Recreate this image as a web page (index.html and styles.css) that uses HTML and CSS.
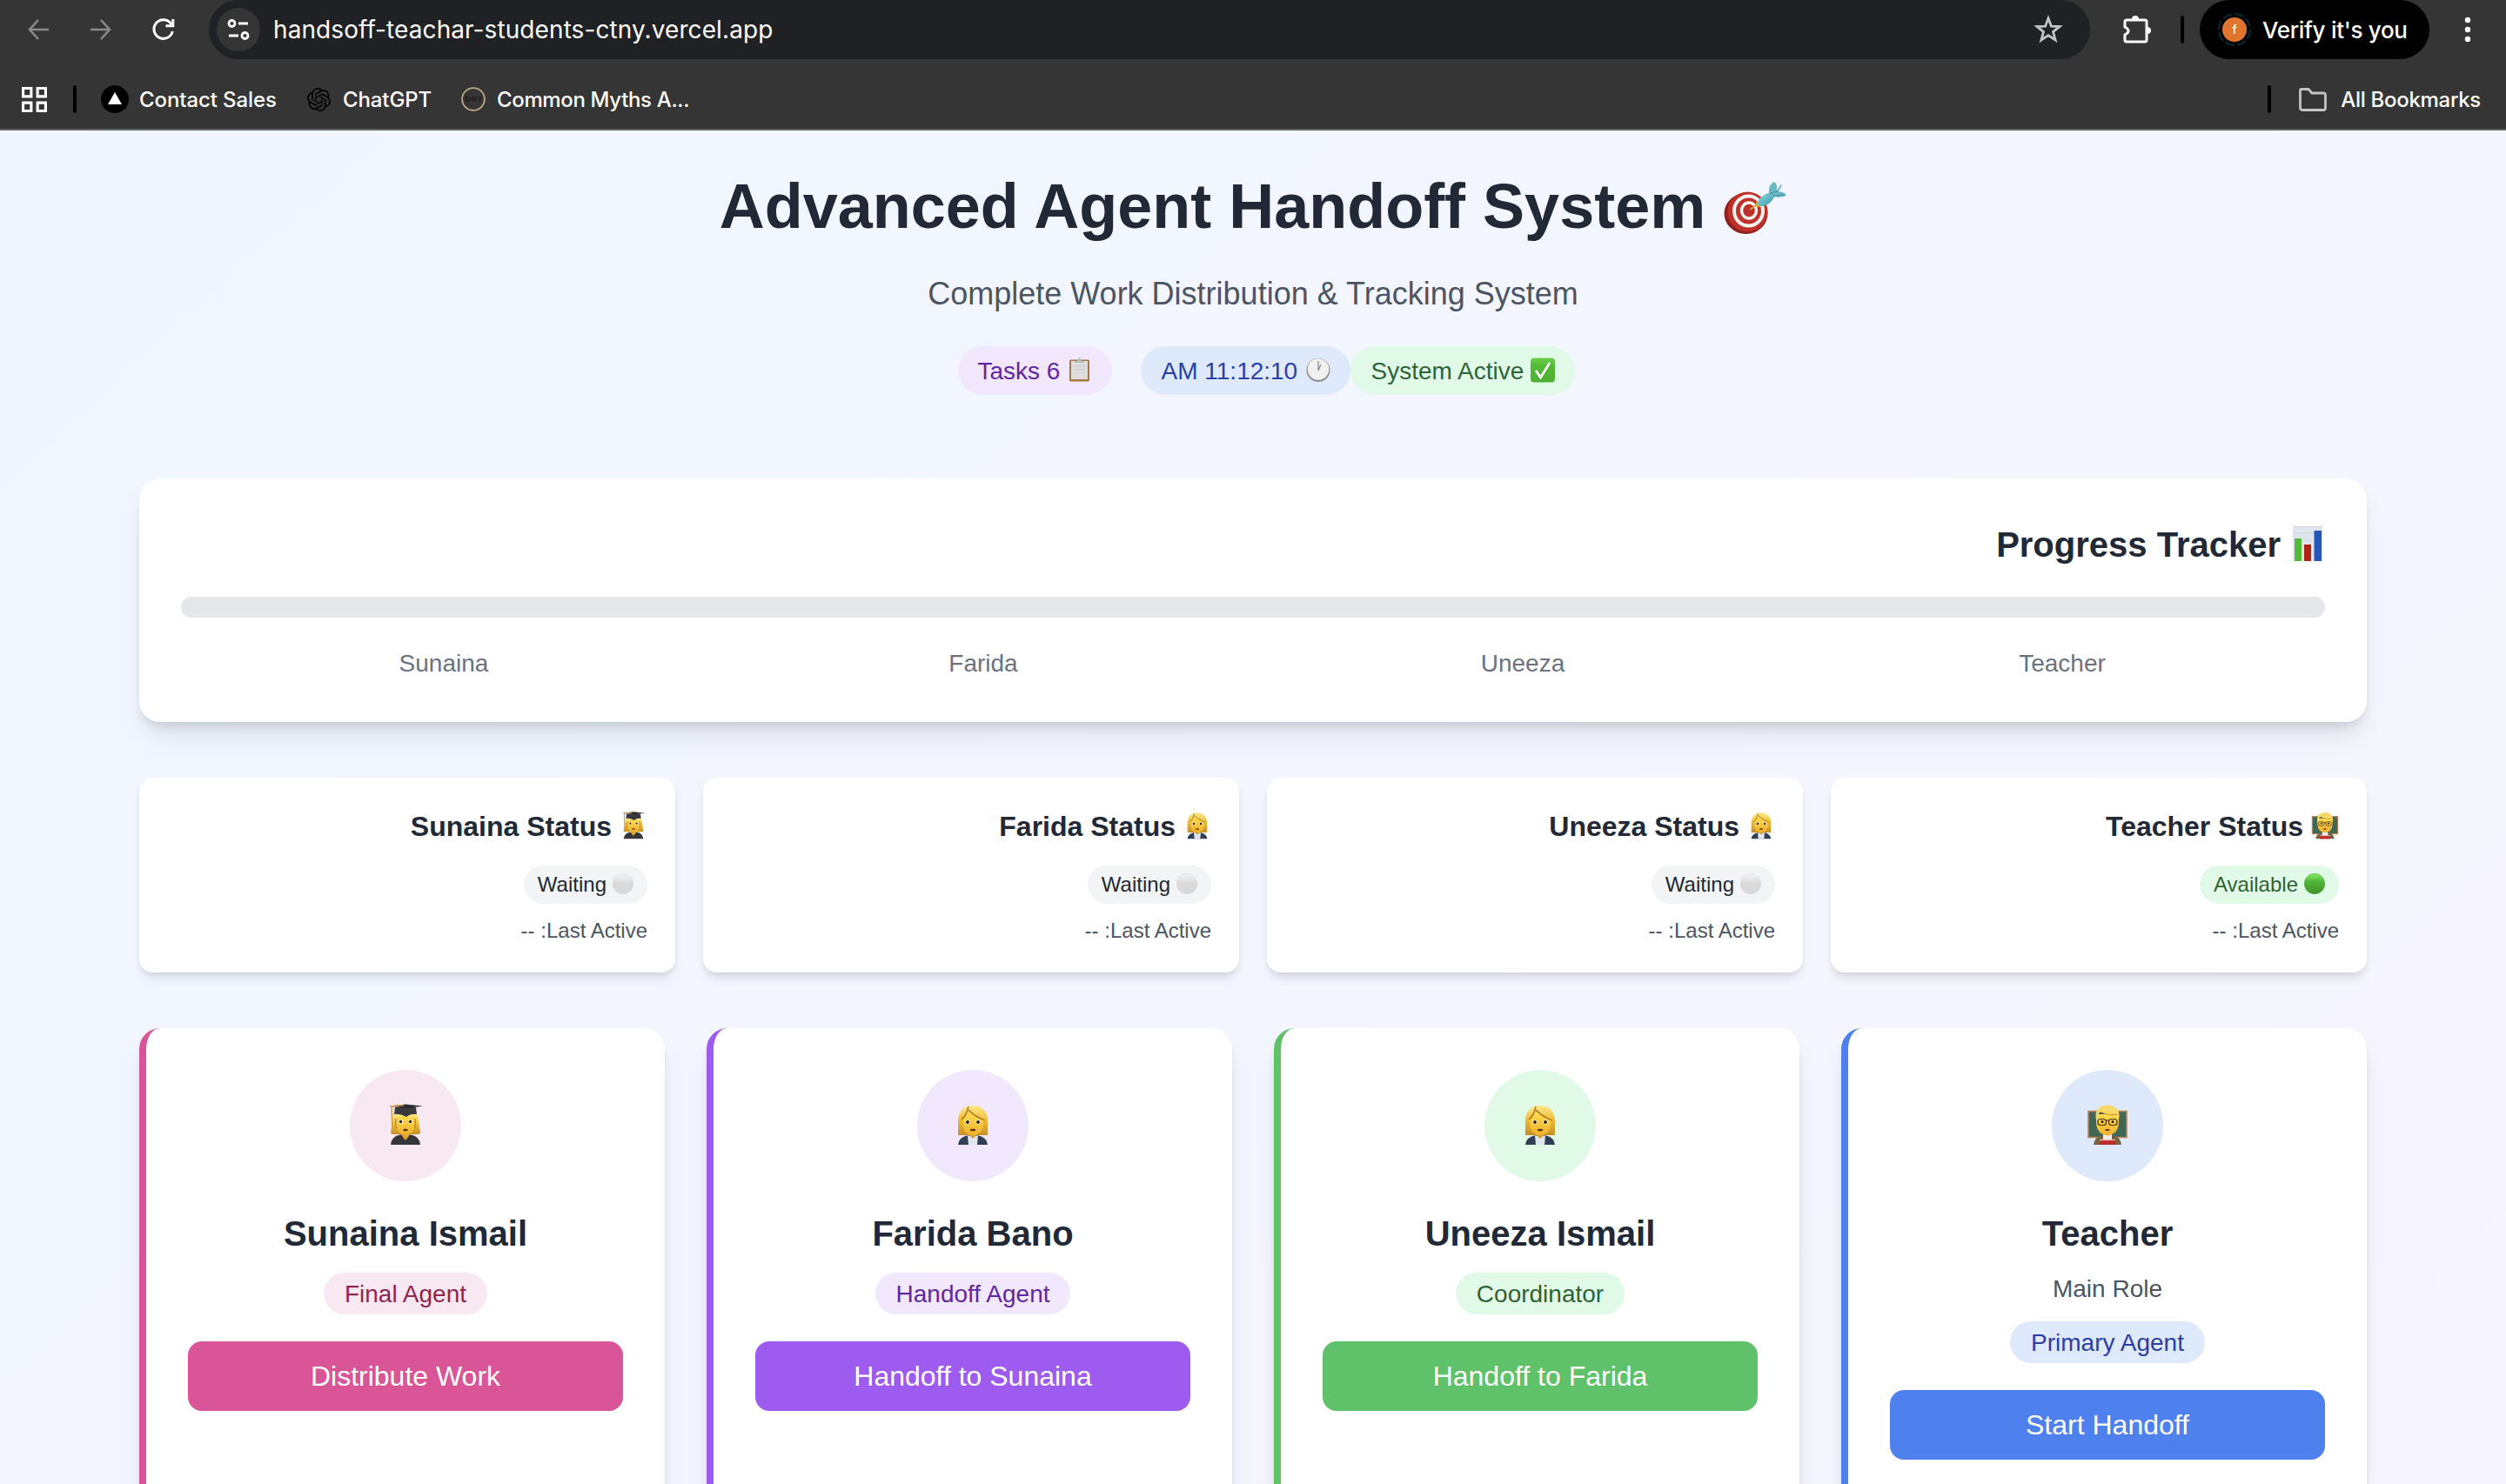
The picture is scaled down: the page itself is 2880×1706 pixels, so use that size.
FILE: index.html
```html
<!DOCTYPE html>
<html lang="en">
<head>
<meta charset="utf-8">
<title>Advanced Agent Handoff System</title>
<link rel="stylesheet" href="styles.css">
</head>
<body>
<svg class="defs" aria-hidden="true">
  <defs>
    <linearGradient id="gHair" x1="0" y1="0" x2="0" y2="1"><stop offset="0" stop-color="#ffe98a"/><stop offset=".5" stop-color="#eebb35"/><stop offset="1" stop-color="#c58f25"/></linearGradient>
    <linearGradient id="gFace" x1="0" y1="0" x2="0" y2="1"><stop offset="0" stop-color="#ffdc50"/><stop offset="1" stop-color="#eeb02c"/></linearGradient>
    <linearGradient id="gWhite" x1="0" y1="0" x2="0" y2="1"><stop offset="0" stop-color="#f6f6f6"/><stop offset=".5" stop-color="#d9d9d9"/><stop offset="1" stop-color="#dadada"/></linearGradient>
    <linearGradient id="gGreen" x1="0" y1="0" x2="0" y2="1"><stop offset="0" stop-color="#85f26b"/><stop offset=".4" stop-color="#50b437"/><stop offset="1" stop-color="#3f9227"/></linearGradient>
    <linearGradient id="gCheck" x1="0" y1="0" x2="0" y2="1"><stop offset="0" stop-color="#6fcf52"/><stop offset=".3" stop-color="#54bb36"/><stop offset="1" stop-color="#4fb032"/></linearGradient>
    <linearGradient id="gDart" x1="0" y1="0" x2="1" y2="1"><stop offset="0" stop-color="#8fdfe8"/><stop offset="1" stop-color="#3b96a5"/></linearGradient>
    <symbol id="student" viewBox="0 0 48 48">
      <path d="M10 12L7 33Q7 35 12 35H36Q41 35 41 33L38 12Z" fill="url(#gHair)"/>
      <path d="M7 47Q8 37 18 35.500H30Q40 37 41 47Z" fill="#35363a"/>
      <path d="M19 33H29L28 37 24 42 20 37Z" fill="#e3a429"/>
      <path d="M13 17Q24 10 35 17V23Q34 35 24 35.500Q14 35 13 23Z" fill="url(#gFace)"/>
      <path d="M13 17Q12 24 13.500 28M35 17Q36 24 34.500 28" fill="none" stroke="#a8731c" stroke-width="1"/>
      <circle cx="18.500" cy="20.500" r="2.600" fill="#fff8e0"/><circle cx="29.500" cy="20.500" r="2.600" fill="#fff8e0"/>
      <circle cx="18.500" cy="20.500" r="1.700" fill="#2d1c0c"/><circle cx="29.500" cy="20.500" r="1.700" fill="#2d1c0c"/>
      <ellipse cx="24" cy="30" rx="2.800" ry="1.300" fill="#5d2b10"/>
      <path d="M12 4H36L37 12Q30 11 25 15Q18 11 11 12Z" fill="#39393b"/>
      <path d="M5 2.500L24 .500 44 2.500 26 5Z" fill="#29292b"/>
      <path d="M22 1.500L8 3 9 30" fill="none" stroke="#d49a45" stroke-width="1.500"/>
    </symbol>
    <symbol id="office" viewBox="0 0 48 48">
      <path d="M7 36V18Q9 2 24 2Q39 2 41 18V36Z" fill="url(#gHair)"/>
      <path d="M7 47Q8 38 19 36H29Q40 38 41 47Z" fill="#313e55"/>
      <path d="M18 36.500H30L29 47H19Z" fill="#dde7ec"/><path d="M19 35H29L24 40Z" fill="#d8992b"/>
      <path d="M12.500 18Q18 14 20 9Q26 14 36 19V25Q34 36 24 36.500Q14 36 12.500 25Z" fill="url(#gFace)"/>
      <path d="M19 3Q17 13 11 18M19 7Q27 15 38 19" fill="none" stroke="#a4711d" stroke-width="1.300"/>
      <circle cx="18" cy="21" r="2.700" fill="#fff8e0"/><circle cx="30" cy="21" r="2.700" fill="#fff8e0"/>
      <circle cx="18" cy="21" r="1.900" fill="#2d1c0c"/><circle cx="30" cy="21" r="1.900" fill="#2d1c0c"/>
      <ellipse cx="24" cy="30" rx="3.200" ry="1.300" fill="#5d2b10"/>
    </symbol>
    <symbol id="teacher" viewBox="0 0 48 48">
      <rect x="2" y="8.500" width="44" height="30" fill="#416656" stroke="#b98258" stroke-width="1.600"/>
      <path d="M8 47Q9 38 17 37H31Q39 38 40 47Z" fill="#75623f"/><path d="M19 35H29V43H19Z" fill="#f2eeee"/>
      <path d="M15 41.500H33V47H15Z" fill="#bf2b2a"/><path d="M15 41.500H33" stroke="#e9b6ac" stroke-width="1.400"/>
      <path d="M11 12H37V22Q36 35 24 36.500Q12 35 11 22Z" fill="url(#gFace)"/>
      <path d="M10.500 17Q9 2 24 1.500Q39 2 37.500 17L35.500 12Q24 14 16 9Q13 11 12.500 16Z" fill="#f8d968"/>
      <path d="M35.500 12Q24 14 16 9" fill="none" stroke="#c48f28" stroke-width="1"/>
      <g fill="none" stroke="#4c3513" stroke-width="1.200"><rect x="13" y="17.500" width="9.500" height="7" rx="3"/><rect x="25.500" y="17.500" width="9.500" height="7" rx="3"/><path d="M22 19H26"/></g>
      <circle cx="18" cy="20.500" r="1.500" fill="#2d1c0c"/><circle cx="30" cy="20.500" r="1.500" fill="#2d1c0c"/>
      <ellipse cx="24" cy="30" rx="2.800" ry="1" fill="#5d2b10"/>
    </symbol>
    <symbol id="white" viewBox="0 0 24 24"><circle cx="12" cy="12" r="11.700" fill="url(#gWhite)" stroke="#cfcfcf" stroke-width=".5"/></symbol>
    <symbol id="green" viewBox="0 0 24 24"><circle cx="12" cy="12" r="11.700" fill="url(#gGreen)" stroke="#3f9a2a" stroke-width=".5"/></symbol>
  </defs>
</svg>

<header class="chrome">
  <div class="toolbar">
    <svg class="nav" viewBox="0 0 24 24"><path d="M24 12H2M12 1L2 12 12 23"/></svg>
    <svg class="nav fwd" viewBox="0 0 24 24"><path d="M0 12H22M12 1L22 12 12 23"/></svg>
    <svg class="reload" viewBox="0 0 28 28"><path d="M24.300 16A10.800 10.800 0 1 1 22 6.500L24.500 9M24.800 2V9.800H16.500"/></svg>
    <div class="omnibox">
      <span class="site"><svg viewBox="0 0 26 26"><circle cx="5.500" cy="6" r="3.500"/><path d="M13 6H24M2 20H13"/><circle cx="20.500" cy="20" r="3.500"/></svg></span>
      <span class="url">handsoff-teachar-students-ctny.vercel.app</span>
      <svg class="star" viewBox="0 0 32 32"><path d="M16 3L19.400 12.200 29 12.600 21.500 18.600 24.100 28 16 22.600 7.900 28 10.500 18.600 3 12.600 12.600 12.200Z"/></svg>
    </div>
    <svg class="puzzle" viewBox="0 0 34 34"><path d="M5 6H26Q28 6 28 8V29Q28 31 26 31H5Q3 31 3 29V23Q7 21 7 18.500Q7 16 3 14V8Q3 6 5 6Z" fill="none" stroke="#fff" stroke-width="3"/><path d="M11 5A4 4 0 0 1 19 5ZM29 14A4 4 0 0 1 29 22Z" fill="#fff"/></svg>
    <i class="bar b1"></i>
    <div class="verify"><svg viewBox="0 0 40 40"><circle cx="20" cy="20" r="18" fill="none" stroke="#0b2328" stroke-width="2.500" stroke-dasharray="11 3"/><circle cx="20" cy="20" r="14" fill="#e0752f"/><text x="20" y="25" text-anchor="middle" class="initial">f</text></svg><span>Verify it's you</span></div>
    <svg class="dots" viewBox="0 0 8 30"><circle cx="4" cy="4" r="3.200"/><circle cx="4" cy="15" r="3.200"/><circle cx="4" cy="26" r="3.200"/></svg>
  </div>
  <div class="bookmarks">
    <svg class="apps" viewBox="0 0 28 28"><path d="M1.500 1.500H10.500V10.500H1.500ZM17.500 1.500H26.500V10.500H17.500ZM1.500 17.500H10.500V26.500H1.500ZM17.500 17.500H26.500V26.500H17.500Z"/></svg>
    <i class="bar b2"></i>
    <svg class="fav" viewBox="0 0 32 32"><circle cx="16" cy="16" r="16"/><path d="M16 8L24 22H8Z" fill="#fff"/></svg>
    <span class="bm t1">Contact Sales</span>
    <svg class="gpt" viewBox="0 0 24 24"><path d="M22.2819 9.8211a5.9847 5.9847 0 0 0-.5157-4.9108 6.0462 6.0462 0 0 0-6.5098-2.9A6.0651 6.0651 0 0 0 4.9807 4.1818a5.9847 5.9847 0 0 0-3.9977 2.9 6.0462 6.0462 0 0 0 .7427 7.0966 5.98 5.98 0 0 0 .511 4.9107 6.051 6.051 0 0 0 6.5146 2.9001A5.9847 5.9847 0 0 0 13.2599 24a6.0557 6.0557 0 0 0 5.7718-4.2058 5.9894 5.9894 0 0 0 3.9977-2.9001 6.0557 6.0557 0 0 0-.7475-7.0729zm-9.022 12.6081a4.4755 4.4755 0 0 1-2.8764-1.0408l.1419-.0804 4.7783-2.7582a.7948.7948 0 0 0 .3927-.6813v-6.7369l2.02 1.1686a.071.071 0 0 1 .038.052v5.5826a4.504 4.504 0 0 1-4.4945 4.4944zm-9.6607-4.1254a4.4708 4.4708 0 0 1-.5346-3.0137l.142.0852 4.783 2.7582a.7712.7712 0 0 0 .7806 0l5.8428-3.3685v2.3324a.0804.0804 0 0 1-.0332.0615L9.74 19.9502a4.4992 4.4992 0 0 1-6.1408-1.6464zM2.3408 7.8956a4.485 4.485 0 0 1 2.3655-1.9728V11.6a.7664.7664 0 0 0 .3879.6765l5.8144 3.3543-2.0201 1.1685a.0757.0757 0 0 1-.071 0l-4.8303-2.7865A4.504 4.504 0 0 1 2.3408 7.872zm16.5963 3.8558L13.1038 8.364 15.1192 7.2a.0757.0757 0 0 1 .071 0l4.8303 2.7913a4.4944 4.4944 0 0 1-.6765 8.1042v-5.6772a.79.79 0 0 0-.407-.667zm2.0107-3.0231l-.142-.0852-4.7735-2.7818a.7759.7759 0 0 0-.7854 0L9.409 9.2297V6.8974a.0662.0662 0 0 1 .0284-.0615l4.8303-2.7866a4.4992 4.4992 0 0 1 6.6802 4.66zM8.3065 12.863l-2.02-1.1638a.0804.0804 0 0 1-.038-.0567V6.0742a4.4992 4.4992 0 0 1 7.3757-3.4537l-.142.0805L8.704 5.459a.7948.7948 0 0 0-.3927.6813zm1.0976-2.3654l2.602-1.4998 2.6069 1.4998v2.9994l-2.5974 1.4997-2.6067-1.4997Z"/></svg>
    <span class="bm t2">ChatGPT</span>
    <svg class="siny" viewBox="0 0 28 28"><circle cx="14" cy="14" r="12.900" fill="none" stroke="#bda982" stroke-width="1.800"/><text x="14.500" y="16.500" text-anchor="middle" class="tiny">SINY</text></svg>
    <span class="bm t3">Common Myths A...</span>
    <i class="bar b3"></i>
    <svg class="folder" viewBox="0 0 32 27"><path d="M3 1.500H11L15 6H28Q30.500 6 30.500 8.500V23Q30.500 25.500 28 25.500H4Q1.500 25.500 1.500 23V3Q1.500 1.500 3 1.500Z"/></svg>
    <span class="bm t4">All Bookmarks</span>
  </div>
</header>

<main class="page">
  <div class="wrap">
    <div class="hero">
      <h1><span>Advanced Agent Handoff System</span><svg viewBox="0 0 72 62"><ellipse cx="25.500" cy="37.500" rx="25" ry="23.500" fill="#8e211b"/><ellipse cx="27.500" cy="35.500" rx="23" ry="23" fill="#c0302a"/><ellipse cx="28.500" cy="34.500" rx="16.500" ry="17" fill="none" stroke="#f4f1ee" stroke-width="4"/><ellipse cx="29" cy="34" rx="8.500" ry="9" fill="none" stroke="#f4f1ee" stroke-width="3.500"/><path d="M30 33L40 26" stroke="#cba13b" stroke-width="2"/><path d="M38 23L43 30 36 29Z" fill="#e9b629"/><path d="M38 27Q41 16 54 13L58 18Q54 28 43 29Z" fill="url(#gDart)"/><path d="M52 14Q51 4 58 1Q62 4 61 11L66 4 67 5 63 12Q70 13 72 16Q68 20 56 18Z" fill="#68b9c4"/><path d="M53 15Q58 12 62 12M57 17L70 16" stroke="#3b8d9a" stroke-width="1" fill="none"/></svg></h1>
      <p class="sub">Complete Work Distribution &amp; Tracking System</p>
      <div class="pills">
        <span class="pill purple p1"><span>Tasks 6</span><svg viewBox="0 0 28 28"><rect x="2" y="2.500" width="23" height="25" rx="1.500" fill="#a87943"/><path d="M4 4H23V25H4Z" fill="#dedede"/><path d="M7 10H20M7 14H20M7 18H20" stroke="#cbcbcb"/><path d="M8 6V4H11Q13.500-4 16 4H19V6Z" fill="#b7bcc0"/></svg></span>
        <span class="pill blue p2"><span>AM 11:12:10</span><svg viewBox="0 0 28 28"><circle cx="14" cy="14.500" r="13.500" fill="#8c8f93"/><circle cx="14" cy="13.500" r="12.300" fill="#f0f0f0"/><path d="M14 15V4M14 15L17 8" stroke="#888" stroke-width="1.200"/></svg></span>
        <span class="pill greenp p3"><span>System Active</span><svg viewBox="0 0 28 28"><rect y=".500" width="28" height="28" rx="4" fill="url(#gCheck)"/><path d="M6 15L11.500 23 22 6" fill="none" stroke="#fff" stroke-width="2.800"/></svg></span>
      </div>
    </div>

    <section class="progress">
      <h2><span>Progress Tracker</span><svg viewBox="0 0 34 40"><rect width="34" height="40" fill="#dfe6ee"/><path d="M0 .500H34M0 8H34M0 16H34M0 24H34M0 32H34" stroke="#d0d9e2"/><path d="M2 14H10V40H2Z" fill="#55b93a"/><path d="M13 21H21V40H13Z" fill="#b02418"/><path d="M24.500 5H33V40H24.500Z" fill="#2557b8"/></svg></h2>
      <div class="track"></div>
      <div class="steps"><span>Sunaina</span><span>Farida</span><span>Uneeza</span><span>Teacher</span></div>
    </section>

    <section class="statuses">
      <article class="status"><h3><span>Sunaina Status</span><svg><use href="#student"/></svg></h3><span class="chip"><span>Waiting</span><svg><use href="#white"/></svg></span><p>-- :Last Active</p></article>
      <article class="status"><h3><span>Farida Status</span><svg><use href="#office"/></svg></h3><span class="chip"><span>Waiting</span><svg><use href="#white"/></svg></span><p>-- :Last Active</p></article>
      <article class="status"><h3><span>Uneeza Status</span><svg><use href="#office"/></svg></h3><span class="chip"><span>Waiting</span><svg><use href="#white"/></svg></span><p>-- :Last Active</p></article>
      <article class="status"><h3><span>Teacher Status</span><svg><use href="#teacher"/></svg></h3><span class="chip greenp"><span>Available</span><svg><use href="#green"/></svg></span><p>-- :Last Active</p></article>
    </section>

    <section class="agents">
      <article class="agent a-pink"><div class="avatar pink"><svg><use href="#student"/></svg></div><h2>Sunaina Ismail</h2><span class="badge pink">Final Agent</span><button>Distribute Work</button></article>
      <article class="agent a-purple"><div class="avatar purple"><svg><use href="#office"/></svg></div><h2>Farida Bano</h2><span class="badge purple">Handoff Agent</span><button>Handoff to Sunaina</button></article>
      <article class="agent a-green"><div class="avatar greenp"><svg><use href="#office"/></svg></div><h2>Uneeza Ismail</h2><span class="badge greenp">Coordinator</span><button>Handoff to Farida</button></article>
      <article class="agent a-blue"><div class="avatar blue"><svg><use href="#teacher"/></svg></div><h2>Teacher</h2><p class="role">Main Role</p><span class="badge blue">Primary Agent</span><button>Start Handoff</button></article>
    </section>
  </div>
</main>
</body>
</html>
```
FILE: styles.css
```css
* { box-sizing: border-box; margin: 0; padding: 0; }
html, body { height: 1706px; overflow: hidden; }
body { font-family: "Liberation Sans", Arial, sans-serif; color: #212936; }
svg { display: block; flex: none; overflow: visible; }
.defs { position: absolute; width: 0; height: 0; }

/* Browser chrome */
.chrome { height: 150px; background: #353535; border-bottom: 2px solid #626262; font-family: Inter, sans-serif; color: #fff; font-weight: 500; }
.toolbar { height: 68px; display: flex; align-items: center; padding-left: 32px; }
.nav { width: 24px; height: 24px; fill: none; stroke: #8a8a8a; stroke-width: 2.6; }
.fwd { margin-left: 48px; }
.reload { width: 28px; height: 28px; margin-left: 46px; fill: none; stroke: #fff; stroke-width: 3; }
.omnibox { width: 2162px; height: 68px; margin-left: 38px; border-radius: 34px; background: #202124; display: flex; align-items: center; padding: 0 32px 0 9px; }
.site { width: 50px; height: 50px; border-radius: 50%; background: #353535; display: flex; align-items: center; justify-content: center; }
.site svg { width: 26px; height: 26px; fill: none; stroke: #fff; stroke-width: 2.8; }
.url { flex: 1; margin-left: 15px; font-size: 28px; font-weight: 400; letter-spacing: .09px; white-space: nowrap; }
.star { width: 32px; height: 32px; fill: none; stroke: #c4c4c4; stroke-width: 2.8; }
.puzzle { width: 34px; height: 34px; margin-left: 37px; }
.bar { width: 4px; background: #000; border-radius: 2px; flex: none; }
.b1 { height: 32px; margin-left: 33px; }
.verify { width: 264px; height: 68px; margin-left: 18px; border-radius: 34px; background: #000; display: flex; align-items: center; padding-left: 20px; font-size: 26px; letter-spacing: -.3px; white-space: nowrap; }
.verify svg { width: 40px; height: 40px; }
.verify span { margin-left: 12px; }
.initial { fill: #fff; font-size: 14px; }
.dots { width: 8px; height: 30px; margin-left: 40px; fill: #fff; }
.bookmarks { height: 92px; display: flex; align-items: center; padding: 0 29px 0 25px; font-size: 24px; white-space: nowrap; }
.apps { width: 29px; height: 29px; fill: none; stroke: #fff; stroke-width: 3; }
.b2 { height: 32px; margin-left: 30px; }
.fav { width: 32px; height: 32px; margin-left: 28px; }
.t1 { width: 158px; margin-left: 12px; letter-spacing: -.1px; }
.gpt { width: 27px; height: 27px; margin-left: 35px; }
.t2 { width: 101px; margin-left: 14px; letter-spacing: -.1px; }
.siny { width: 28px; height: 28px; margin-left: 35px; }
.tiny { font-size: 7px; fill: #111; letter-spacing: 1px; }
.t3 { margin-left: 13px; letter-spacing: -.35px; }
.b3 { height: 32px; margin-left: auto; }
.folder { width: 32px; height: 27px; margin-left: 32px; fill: none; stroke: #c4c4c4; stroke-width: 2.8; }
.t4 { margin-left: 16px; letter-spacing: -.3px; }

/* Page */
.page { height: 1556px; padding-top: 47px; background: linear-gradient(to bottom right, #f0f6ff, #f9f5ff) 0 0 / 100% 2700px no-repeat; overflow: hidden; }
.wrap { width: 2560px; margin: 0 auto; }
.hero { height: 353px; display: flex; flex-direction: column; align-items: center; }
h1 { display: flex; font-size: 72px; line-height: 80px; white-space: nowrap; }
h1 svg { width: 72px; height: 62px; margin: 11px 0 0 21px; }
.sub { margin-top: 33px; font-size: 36px; line-height: 56px; color: #4b5563; }
.pills { margin: 32px 0 0 30px; display: flex; }
.pill { height: 56px; padding: 9px 23px 7px 24px; border-radius: 28px; display: flex; justify-content: space-between; font-size: 28px; line-height: 40px; white-space: nowrap; }
.pill svg { width: 28px; height: 28px; margin-top: 4px; }
.p1 { width: 177px; margin-right: 33px; padding-left: 23px; }
.p2 { width: 241px; }
.p3 { width: 258px; }
.purple { background: #f1e8fd; color: #6227a3; }
.blue { background: #dee9fb; color: #2a40a8; }
.greenp { background: #e1f9e7; color: #2f6338; }
.pink { background: #f8e8f2; color: #8f2550; }

.progress { height: 280px; padding: 48px; border-radius: 24px; background: #fff; box-shadow: 0 20px 30px -6px rgba(0,0,0,.1), 0 8px 12px -4px rgba(0,0,0,.1); }
h2 { font-size: 40px; line-height: 56px; }
.progress h2 { display: flex; justify-content: flex-end; padding-right: 3px; }
.progress h2 svg { width: 34px; height: 40px; margin: 7px 0 0 14px; }
.track { height: 24px; margin-top: 32px; border-radius: 12px; background: #e5e7eb; }
.steps { margin-top: 33px; display: grid; grid-template-columns: repeat(4, 1fr); gap: 16px; text-align: center; font-size: 28px; line-height: 40px; color: #6b7280; }

.statuses { margin-top: 64px; display: grid; grid-template-columns: repeat(4, 1fr); gap: 32px; }
.status { height: 224px; padding: 32px; border-radius: 16px; background: #fff; box-shadow: 0 8px 12px -2px rgba(0,0,0,.1), 0 4px 8px -4px rgba(0,0,0,.1); display: flex; flex-direction: column; align-items: flex-end; }
h3 { display: flex; font-size: 32px; line-height: 48px; }
h3 svg { width: 32px; height: 32px; margin: 7px 0 0 9px; }
.chip { height: 44px; margin-top: 21px; padding: 8px 16px; border-radius: 22px; display: flex; font-size: 24px; line-height: 28px; }
.chip:not(.greenp) { background: #f3f4f6; }
.chip svg { width: 24px; height: 24px; margin: 1px 0 0 7px; }
.status p { margin-top: 15px; font-size: 24px; line-height: 32px; color: #4b5563; }

.agents { margin-top: 64px; display: grid; grid-template-columns: repeat(4, 1fr); gap: 48px; }
.agent { height: 620px; padding: 48px; border-radius: 24px; border-left: 8px solid var(--accent); background: #fff; box-shadow: 0 20px 30px -6px rgba(0,0,0,.1), 0 8px 12px -4px rgba(0,0,0,.1); display: flex; flex-direction: column; align-items: center; }
.a-pink { --accent: #da5597; }
.a-purple { --accent: #9e5bef; }
.a-green { --accent: #5fc26b; }
.a-blue { --accent: #4f81ee; }
.avatar { width: 128px; height: 128px; border-radius: 50%; display: flex; justify-content: center; padding-top: 39px; }
.avatar svg { width: 48px; height: 48px; }
.agent h2 { margin-top: 32px; }
.role { margin-top: 16px; font-size: 28px; line-height: 40px; color: #4b5563; }
.badge { height: 48px; margin-top: 17px; padding: 8px 24px; border-radius: 24px; font-size: 28px; line-height: 34px; }
button { width: 100%; height: 80px; margin-top: 31px; border: 0; border-radius: 16px; background: var(--accent); color: #fff; font: 32px/80px "Liberation Sans", Arial, sans-serif; }
```
